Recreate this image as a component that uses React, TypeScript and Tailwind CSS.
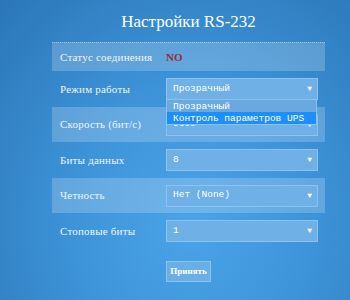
const serif = { fontFamily: '"Liberation Serif", "DejaVu Serif", serif' }
const mono = { fontFamily: '"Liberation Mono", "DejaVu Sans Mono", monospace' }

function Select({ value }: { value: string }) {
  return (
    <div
      className="w-[152px] h-[22px] flex items-center justify-between pl-[6px] pr-[5px] bg-[#6fb0e6] border border-[#8cc3ee] text-white text-[9.5px]"
      style={mono}
    >
      <span>{value}</span>
      <span className="text-[8px] leading-none">▼</span>
    </div>
  )
}

function Row({
  label,
  value,
  shaded,
  h,
  children,
}: {
  label: string
  value?: string
  shaded?: boolean
  h: string
  children?: React.ReactNode
}) {
  return (
    <div className={`relative flex items-center ${h} ${shaded ? "bg-white/20" : ""}`}>
      <div className="w-[114px] pl-[8px] text-[11px] tracking-[0.2px] text-[#eef4fb]" style={serif}>
        {label}
      </div>
      {value !== undefined && <Select value={value} />}
      {children}
    </div>
  )
}

export default function App() {
  return (
    <div className="w-[350px] h-[300px] overflow-hidden bg-[radial-gradient(ellipse_at_55%_75%,#4ba4e7_0%,#3d93d8_45%,#2b76b7_100%)]">
      <div className="ml-[52px] w-[273px]">
        {/* заголовок */}
        <div className="h-[42px] pt-[12px] text-center text-white text-[17px] leading-[20px]" style={serif}>
          Настройки RS-232
        </div>

        <div className="flex items-center h-[29px] bg-white/20 border-t border-dotted border-white/40">
          <div className="w-[114px] pl-[8px] text-[11px] tracking-[0.2px] text-[#eef4fb]" style={serif}>
            Статус соединения
          </div>
          <span className="text-[11px] font-bold text-[#9b2a3d]" style={serif}>
            NO
          </span>
        </div>

        <Row label="Режим работы" value="Прозрачный" h="h-[36px]">
          {/* открытый список */}
          <div
            className="absolute left-[114px] top-[29px] w-[151px] z-10 bg-[#6aa9df] border border-[#8cc3ee] border-t-0 text-white text-[9.5px] leading-[11px]"
            style={mono}
          >
            <div className="pl-[6px] h-[12px] flex items-center">Прозрачный</div>
            <div className="pl-[6px] h-[12px] flex items-center bg-[#1e8ff8]">Контроль параметров UPS</div>
          </div>
        </Row>
        <Row label="Скорость (бит/с)" value="9600" shaded h="h-[35px]" />
        <Row label="Биты данных" value="8" h="h-[36px]" />
        <Row label="Четность" value="Нет (None)" shaded h="h-[35px]" />
        <Row label="Стоповые биты" value="1" h="h-[36px]" />

        <div className="pl-[114px] pt-[7px]">
          <button
            className="w-[45px] h-[21px] bg-[#6aaee6] border border-[#8cc3ee] text-white text-[9px] font-bold"
            style={serif}
          >
            Принять
          </button>
        </div>
      </div>
    </div>
  )
}
